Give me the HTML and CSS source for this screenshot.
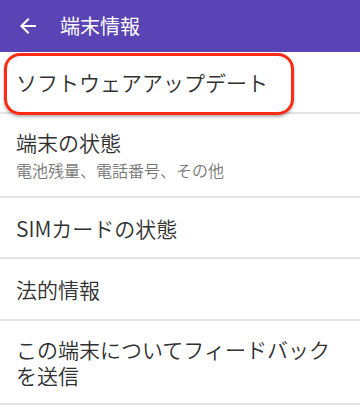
FILE: index.html
```html
<!DOCTYPE html>
<html lang="ja">
<head>
<meta charset="utf-8">
<link rel="stylesheet" href="styles.css">
</head>
<body>
<header class="appbar">
  <svg class="back" viewBox="0 0 24 24" width="24" height="24"><path d="M20 11H7.83l5.59-5.59L12 4l-8 8 8 8 1.41-1.41L7.83 13H20v-2z" fill="#fff"/></svg>
  <h1 class="title">端末情報</h1>
</header>
<ul class="list">
  <li class="item item-single item-first"><span class="label">ソフトウェアアップデート</span><div class="highlight"></div></li>
  <li class="item item-double"><span class="label">端末の状態</span><span class="sub">電池残量、電話番号、その他</span></li>
  <li class="item item-single item-short"><span class="label">SIMカードの状態</span></li>
  <li class="item item-single"><span class="label">法的情報</span></li>
  <li class="item item-double"><span class="label wrap">この端末についてフィードバックを送信</span></li>
</ul>
</body>
</html>
```
FILE: styles.css
```css
html, body {
  margin: 0;
  padding: 0;
  background: #ffffff;
  font-family: "Noto Sans CJK JP", "Noto Sans", sans-serif;
}
.appbar {
  height: 52px;
  background: #5a43b4;
  display: flex;
  align-items: center;
  padding-left: 16px;
  gap: 20px;
  box-sizing: border-box;
}
.back {
  display: block;
  flex: none;
}
.title {
  margin: 0;
  color: #ffffff;
  font-size: 20px;
  font-weight: 400;
  line-height: 1;
}
.list {
  list-style: none;
  margin: 0;
  padding: 0;
}
.item {
  position: relative;
  display: flex;
  flex-direction: column;
  justify-content: center;
  padding: 0 16px;
  border-bottom: 2px solid #e3e3e3;
  box-sizing: border-box;
}
.item-single {
  height: 62px;
}
.item-short {
  height: 61px;
}
.item-double {
  height: 84px;
}
.label {
  font-size: 21px;
  font-weight: 350;
  color: #303030;
  line-height: 26px;
}
.label.wrap {
  width: 320px;
}
.sub {
  font-size: 16px;
  font-weight: 350;
  color: #777777;
  line-height: 22px;
  margin-top: 4px;
}
.highlight {
  position: absolute;
  left: 4px;
  top: 1px;
  width: 290px;
  height: 62px;
  border: 3px solid #ff2a14;
  border-radius: 16px;
  box-sizing: border-box;
  box-shadow: 0 2px 3px rgba(0, 0, 0, 0.3);
}
```
